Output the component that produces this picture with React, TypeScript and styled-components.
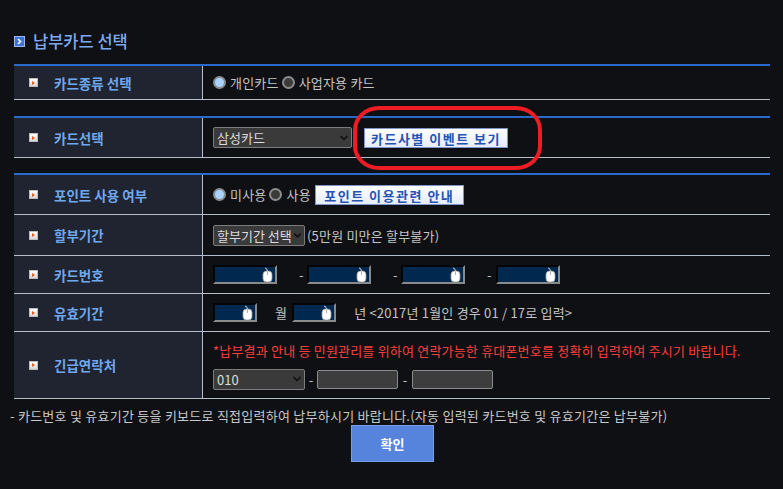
import React from 'react';
import styled, { createGlobalStyle } from 'styled-components';
import { ChevronDown } from 'lucide-react';

const GlobalStyle = createGlobalStyle`
  html, body {
    margin: 0;
    padding: 0;
    background: #0f1013;
  }
  body {
    font-family: "Noto Sans CJK KR", "Noto Sans", sans-serif;
    font-size: 13px;
    color: #c4c4c4;
  }
`;

const Page = styled.div`
  position: relative;
  width: 783px;
  height: 489px;
  padding-top: 29px;
  box-sizing: border-box;
  overflow: hidden;
`;

const Title = styled.h2`
  margin: 0 0 0 14px;
  height: 24px;
  display: flex;
  align-items: center;
  gap: 8px;
  font-size: 16.5px;
  font-weight: 500;
  color: #7ea9f2;
`;

const TitleIcon = styled.span`
  width: 11px;
  height: 11px;
  background: #3d73d8;
  border: 1px solid #9cb8ea;
  box-sizing: border-box;
  display: flex;
  align-items: center;
  justify-content: center;
`;

const Table = styled.div<{ $gap: number }>`
  margin: ${(p) => p.$gap}px 0 0 14px;
  width: 756px;
  border-top: 2px solid #2a6acb;
`;

const Row = styled.div<{ $h: number }>`
  display: grid;
  grid-template-columns: 189px 1fr;
  height: ${(p) => p.$h}px;
  border-bottom: 1px solid #b5bdca;
`;

const Label = styled.div`
  background: #1f2430;
  border-right: 1px solid #b5bdca;
  display: flex;
  align-items: center;
  padding-left: 15px;
  gap: 16px;
  font-size: 13.5px;
  font-weight: 700;
  color: #6fa8ee;
`;

const Bullet = styled.span`
  width: 9px;
  height: 9px;
  background: linear-gradient(#ffffff, #d9d9d9);
  border: 1px solid #bcbcbc;
  box-sizing: border-box;
  display: flex;
  align-items: center;
  padding-left: 2px;
  &::after {
    content: '';
    border-left: 3px solid #ee5a1c;
    border-top: 2.5px solid transparent;
    border-bottom: 2.5px solid transparent;
  }
`;

const Cell = styled.div<{ $column?: boolean }>`
  display: flex;
  flex-direction: ${(p) => (p.$column ? 'column' : 'row')};
  align-items: ${(p) => (p.$column ? 'flex-start' : 'center')};
  justify-content: ${(p) => (p.$column ? 'center' : 'flex-start')};
  padding-left: 10px;
  gap: ${(p) => (p.$column ? '9px' : '0')};
`;

const Line = styled.div`
  display: flex;
  align-items: center;
`;

const Radio = styled.span<{ $checked?: boolean }>`
  width: 13px;
  height: 13px;
  border-radius: 50%;
  box-sizing: border-box;
  border: 2px solid #8d8d8d;
  background: ${(p) => (p.$checked ? '#a9d2ff' : '#3b3b3b')};
  margin-right: 4px;
`;

const Text = styled.span<{ $ml?: number; $mr?: number }>`
  color: #c4c4c4;
  font-size: 13px;
  letter-spacing: 0.2px;
  margin-left: ${(p) => p.$ml || 0}px;
  margin-right: ${(p) => p.$mr || 0}px;
  white-space: nowrap;
`;

const InfoButton = styled.button<{ $w: number }>`
  width: ${(p) => p.$w}px;
  height: 20px;
  padding: 0;
  background: linear-gradient(#ffffff, #e6ecf8);
  border: 1px solid #7f96c8;
  color: #2553b3;
  font-family: "Noto Sans CJK KR", sans-serif;
  font-size: 13px;
  font-weight: 700;
  letter-spacing: 1.5px;
  white-space: nowrap;
`;

const SelectBox = styled.div<{ $w: number }>`
  width: ${(p) => p.$w}px;
  height: 21px;
  box-sizing: border-box;
  background: #3a3a3a;
  border: 1px solid #7c7c7c;
  border-radius: 2px;
  display: flex;
  align-items: center;
  justify-content: space-between;
  padding: 0 1px 0 3px;
  color: #dcdcdc;
  font-size: 13px;
  white-space: nowrap;
`;

const SecureInput = styled.div<{ $w: number }>`
  width: ${(p) => p.$w}px;
  height: 19px;
  box-sizing: border-box;
  background: #01284f;
  border-top: 2px solid #050505;
  border-left: 2px solid #050505;
  border-bottom: 2px solid #8a8a8a;
  border-right: 2px solid #8a8a8a;
  display: flex;
  justify-content: flex-end;
  align-items: flex-end;
  padding-right: 2px;
`;

const Dash = styled.span<{ $w: number; $pl?: number }>`
  width: ${(p) => p.$w}px;
  box-sizing: border-box;
  padding-left: ${(p) => p.$pl || 0}px;
  text-align: ${(p) => (p.$pl ? 'left' : 'center')};
  color: #c4c4c4;
`;

const PhoneInput = styled.div`
  width: 81px;
  height: 19px;
  box-sizing: border-box;
  background: #3d3d3d;
  border: 1px solid #8a8a8a;
  border-radius: 2px;
`;

const Warn = styled.div`
  color: #ff3d3d;
  font-size: 13px;
  letter-spacing: 0.2px;
  white-space: nowrap;
`;

const Note = styled.p`
  margin: 7px 0 0 10px;
  font-size: 13px;
  letter-spacing: 0.25px;
  color: #c8c8c8;
  white-space: nowrap;
`;

const Confirm = styled.button`
  display: block;
  margin: 0 auto;
  position: relative;
  left: 1px;
  width: 83px;
  height: 37px;
  background: #5683dc;
  border: 1px solid #7b9de6;
  color: #ffffff;
  font-family: "Noto Sans CJK KR", sans-serif;
  font-size: 13px;
  font-weight: 700;
`;

const Highlight = styled.div`
  position: absolute;
  left: 353px;
  top: 106px;
  width: 189px;
  height: 64px;
  box-sizing: border-box;
  border: 4px solid #ee1c25;
  border-radius: 26px / 24px;
  pointer-events: none;
`;

function Mouse() {
  return (
    <svg width="11" height="15" viewBox="0 0 11 15">
      <path d="M3 1 Q5 1 5.5 4" stroke="#d8d8d8" fill="none" strokeWidth="1" />
      <rect x="1" y="4" width="9" height="11" rx="3.5" fill="#ffffff" stroke="#9a9a9a" strokeWidth="0.8" />
      <line x1="5.5" y1="4.5" x2="5.5" y2="8" stroke="#9a9a9a" strokeWidth="0.8" />
    </svg>
  );
}

function App() {
  return (
    <Page>
      <GlobalStyle />
      <Title>
        <TitleIcon>
          <svg width="7" height="7" viewBox="0 0 7 7">
            <path d="M2 1 L4.5 3.5 L2 6" stroke="#fff" strokeWidth="1.6" fill="none" />
          </svg>
        </TitleIcon>
        납부카드 선택
      </Title>

      <Table $gap={11}>
        <Row $h={33}>
          <Label><Bullet />카드종류 선택</Label>
          <Cell>
            <Line>
              <Radio $checked />
              <Text $mr={3}>개인카드</Text>
              <Radio />
              <Text>사업자용 카드</Text>
            </Line>
          </Cell>
        </Row>
      </Table>

      <Table $gap={16}>
        <Row $h={39}>
          <Label><Bullet />카드선택</Label>
          <Cell>
            <Line>
              <SelectBox $w={139}>
                삼성카드
                <ChevronDown size={12} strokeWidth={3.5} color="#111" />
              </SelectBox>
              <span style={{ width: 12 }} />
              <InfoButton $w={144}>카드사별 이벤트 보기</InfoButton>
            </Line>
          </Cell>
        </Row>
      </Table>

      <Table $gap={15}>
        <Row $h={39}>
          <Label><Bullet />포인트 사용 여부</Label>
          <Cell>
            <Line>
              <Radio $checked />
              <Text $mr={3}>미사용</Text>
              <Radio />
              <Text $mr={4}>사용</Text>
              <InfoButton $w={149}>포인트 이용관련 안내</InfoButton>
            </Line>
          </Cell>
        </Row>
        <Row $h={40}>
          <Label><Bullet />할부기간</Label>
          <Cell>
            <Line>
              <SelectBox $w={92}>
                할부기간 선택
                <ChevronDown size={11} strokeWidth={3.5} color="#111" />
              </SelectBox>
              <Text $ml={2}>(5만원 미만은 할부불가)</Text>
            </Line>
          </Cell>
        </Row>
        <Row $h={37}>
          <Label><Bullet />카드번호</Label>
          <Cell>
            <Line>
              <SecureInput $w={64}><Mouse /></SecureInput>
              <Dash $w={30} $pl={22}>-</Dash>
              <SecureInput $w={64}><Mouse /></SecureInput>
              <Dash $w={30} $pl={22}>-</Dash>
              <SecureInput $w={64}><Mouse /></SecureInput>
              <Dash $w={31} $pl={22}>-</Dash>
              <SecureInput $w={64}><Mouse /></SecureInput>
            </Line>
          </Cell>
        </Row>
        <Row $h={37}>
          <Label><Bullet />유효기간</Label>
          <Cell>
            <Line>
              <SecureInput $w={44}><Mouse /></SecureInput>
              <Text $ml={18} $mr={5}>월</Text>
              <SecureInput $w={44}><Mouse /></SecureInput>
              <Text $ml={18}>년 &lt;2017년 1월인 경우 01 / 17로 입력&gt;</Text>
            </Line>
          </Cell>
        </Row>
        <Row $h={66}>
          <Label><Bullet />긴급연락처</Label>
          <Cell $column>
            <Warn>*납부결과 안내 등 민원관리를 위하여 연락가능한 휴대폰번호를 정확히 입력하여 주시기 바랍니다.</Warn>
            <Line>
              <SelectBox $w={92}>
                010
                <ChevronDown size={12} strokeWidth={3.5} color="#111" />
              </SelectBox>
              <Dash $w={12}>-</Dash>
              <PhoneInput />
              <Dash $w={14}>-</Dash>
              <PhoneInput />
            </Line>
          </Cell>
        </Row>
      </Table>

      <Note>- 카드번호 및 유효기간 등을 키보드로 직접입력하여 납부하시기 바랍니다.(자동 입력된 카드번호 및 유효기간은 납부불가)</Note>
      <Confirm>확인</Confirm>

      <Highlight />
    </Page>
  );
}

export default App;
